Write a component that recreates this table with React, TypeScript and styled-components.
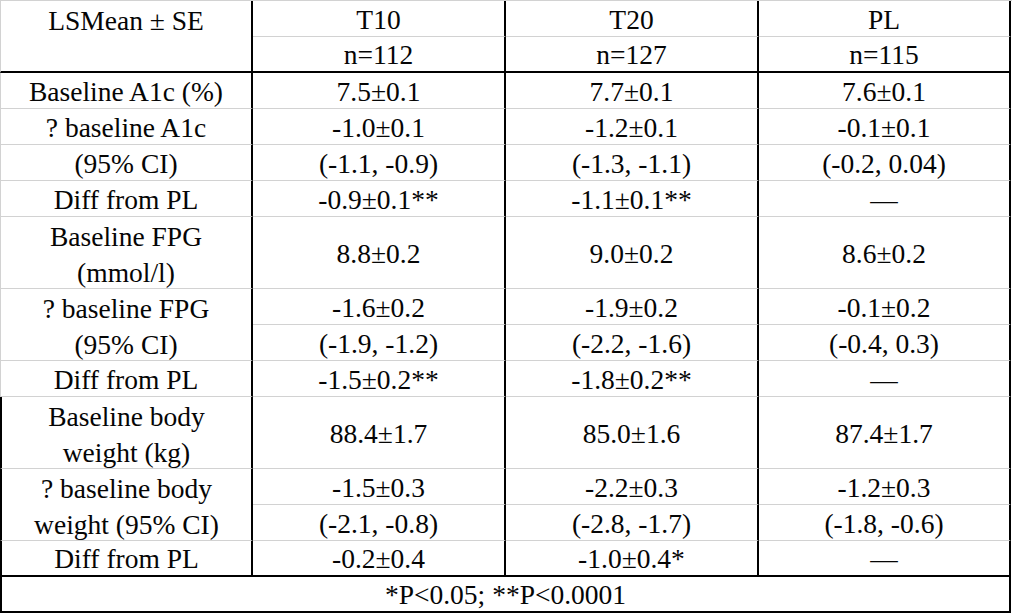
import React from "react";
import styled, { createGlobalStyle } from "styled-components";

const GlobalStyle = createGlobalStyle`
  html, body {
    margin: 0;
    padding: 0;
    background: #ffffff;
  }
  body {
    font-family: "Liberation Serif", "Times New Roman", serif;
    color: #000000;
  }
`;

const GRAY = "#d2d2d2";
const BLACK = "#000000";

const Table = styled.div`
  display: grid;
  grid-template-columns: 253px 253px 253px 252px;
  grid-template-rows: repeat(17, 36px);
  width: 1012px;
  border-top: 1px solid ${GRAY};
  font-family: "Liberation Serif", "Times New Roman", serif;
  font-size: 27.5px;
  color: #050505;
`;

type Edge = "gray" | "black";

const Cell = styled.div<{
  $rows?: number;
  $bottom?: Edge;
  $left?: Edge | "none";
  $valign?: "top" | "center";
  $full?: boolean;
}>`
  box-sizing: border-box;
  grid-row: span ${(p) => p.$rows ?? 1};
  grid-column: ${(p) => (p.$full ? "1 / -1" : "auto")};
  display: flex;
  flex-direction: column;
  align-items: center;
  justify-content: ${(p) => (p.$valign === "top" ? "flex-start" : "center")};
  padding-top: 2px;
  text-align: center;
  line-height: 36px;
  white-space: nowrap;
  border-right: 2px solid ${BLACK};
  border-bottom: ${(p) => (p.$bottom === "black" ? `2px solid ${BLACK}` : `1px solid ${GRAY}`)};
  border-left: ${(p) =>
    p.$left === "black"
      ? `2px solid ${BLACK}`
      : p.$left === "gray"
      ? `1px solid ${GRAY}`
      : "none"};
`;

const Line = styled.span`
  display: block;
  height: 36px;
`;

type Row = {
  label: string[];
  labelRows?: number;
  values: string[];
  valueRows?: number;
  bottom?: Edge;
  left?: Edge;
};

const rows: Row[] = [
  { label: ["Baseline A1c (%)"], values: ["7.5±0.1", "7.7±0.1", "7.6±0.1"] },
  { label: ["? baseline A1c"], values: ["-1.0±0.1", "-1.2±0.1", "-0.1±0.1"] },
  { label: ["(95% CI)"], values: ["(-1.1, -0.9)", "(-1.3, -1.1)", "(-0.2, 0.04)"] },
  { label: ["Diff from PL"], values: ["-0.9±0.1**", "-1.1±0.1**", "—"] },
  {
    label: ["Baseline FPG", "(mmol/l)"],
    labelRows: 2,
    values: ["8.8±0.2", "9.0±0.2", "8.6±0.2"],
    valueRows: 2,
  },
  {
    label: ["? baseline FPG", "(95% CI)"],
    labelRows: 2,
    values: ["-1.6±0.2", "-1.9±0.2", "-0.1±0.2"],
  },
  { label: [], values: ["(-1.9, -1.2)", "(-2.2, -1.6)", "(-0.4, 0.3)"] },
  { label: ["Diff from PL"], values: ["-1.5±0.2**", "-1.8±0.2**", "—"] },
  {
    label: ["Baseline body", "weight (kg)"],
    labelRows: 2,
    values: ["88.4±1.7", "85.0±1.6", "87.4±1.7"],
    valueRows: 2,
    left: "black",
  },
  {
    label: ["? baseline body", "weight (95% CI)"],
    labelRows: 2,
    values: ["-1.5±0.3", "-2.2±0.3", "-1.2±0.3"],
    left: "black",
  },
  { label: [], values: ["(-2.1, -0.8)", "(-2.8, -1.7)", "(-1.8, -0.6)"] },
  {
    label: ["Diff from PL"],
    values: ["-0.2±0.4", "-1.0±0.4*", "—"],
    bottom: "black",
    left: "black",
  },
];

export default function App() {
  return (
    <>
      <GlobalStyle />
      <Table>
        <Cell $rows={2} $valign="top" $bottom="black" $left="gray">
          LSMean ± SE
        </Cell>
        <Cell>T10</Cell>
        <Cell>T20</Cell>
        <Cell>PL</Cell>
        <Cell $bottom="black">n=112</Cell>
        <Cell $bottom="black">n=127</Cell>
        <Cell $bottom="black">n=115</Cell>
        {rows.map((r, i) => (
          <React.Fragment key={i}>
            {r.label.length > 0 && (
              <Cell
                $rows={r.labelRows ?? 1}
                $valign={r.labelRows ? "top" : "center"}
                $bottom={r.bottom ?? "gray"}
                $left={r.left ?? "gray"}
              >
                {r.label.length > 1
                  ? r.label.map((l) => <Line key={l}>{l}</Line>)
                  : r.label[0]}
              </Cell>
            )}
            {r.values.map((v, j) => (
              <Cell key={j} $rows={r.valueRows ?? 1} $bottom={r.bottom ?? "gray"}>
                {v}
              </Cell>
            ))}
          </React.Fragment>
        ))}
        <Cell $full $bottom="black" $left="black">
          *P&lt;0.05; **P&lt;0.0001
        </Cell>
      </Table>
    </>
  );
}
